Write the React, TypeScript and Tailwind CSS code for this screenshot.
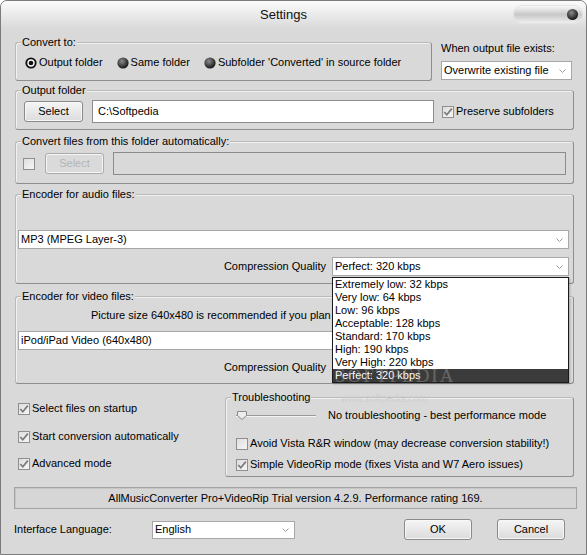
import React from "react";

const qualities = [
  "Extremely low: 32 kbps",
  "Very low: 64 kbps",
  "Low: 96 kbps",
  "Acceptable: 128 kbps",
  "Standard: 170 kbps",
  "High: 190 kbps",
  "Very High: 220 kbps",
  "Perfect: 320 kbps",
];

function Group({ title, className = "", children }: { title: string; className?: string; children?: React.ReactNode }) {
  return (
    <fieldset
      className={`rounded-[3px] border border-[#b9b9b9] border-b-[#8e8e8e] border-r-[#8e8e8e] shadow-[inset_1px_1px_0_#f1f1f1] ${className}`}
    >
      <legend className="ml-[5px] bg-[#d9d9d9] px-[1px] leading-[13px]">{title}</legend>
      {children}
    </fieldset>
  );
}

function Radio({ on = false }: { on?: boolean }) {
  return (
    <svg width="12" height="12" viewBox="0 0 12 12" className="shrink-0">
      <defs>
        <radialGradient id="sphere" cx="40%" cy="35%" r="65%">
          <stop offset="0" stopColor="#8c8c8c" />
          <stop offset="1" stopColor="#151515" />
        </radialGradient>
      </defs>
      {on ? (
        <>
          <circle cx="6" cy="6" r="5.6" fill="#111" />
          <circle cx="6" cy="6" r="3.7" fill="#fff" />
          <circle cx="6" cy="6" r="2.3" fill="#111" />
        </>
      ) : (
        <circle cx="6" cy="6" r="5.6" fill="url(#sphere)" />
      )}
    </svg>
  );
}

function Check({ checked = false }: { checked?: boolean }) {
  return (
    <span className="flex h-[12px] w-[12px] shrink-0 items-center justify-center border border-[#8f8f8f] bg-gradient-to-br from-[#dedede] to-[#f6f6f6]">
      {checked && (
        <svg width="10" height="10" viewBox="0 0 10 10">
          <path d="M1.3 5 L3.8 7.8 L8.8 1.6" fill="none" stroke="#7a7a7a" strokeWidth="1.7" />
        </svg>
      )}
    </span>
  );
}

function CheckRow({ checked, text, className = "" }: { checked?: boolean; text: string; className?: string }) {
  return (
    <div className={`flex h-[13px] items-center gap-[2px] ${className}`}>
      <Check checked={checked} />
      <span className="whitespace-nowrap">{text}</span>
    </div>
  );
}

function Combo({ value, className = "" }: { value: string; className?: string }) {
  return (
    <div className={`flex items-center border border-[#a7a7a7] bg-white pl-[2px] ${className}`}>
      <span className="flex-1 truncate">{value}</span>
      <svg width="7" height="4" viewBox="0 0 7 4" className="mr-[5px] shrink-0">
        <path d="M0.5 0.5 L3.5 3.5 L6.5 0.5" fill="none" stroke="#9c9c9c" />
      </svg>
    </div>
  );
}

function Btn({ children, className = "", disabled = false }: { children: React.ReactNode; className?: string; disabled?: boolean }) {
  return (
    <div
      className={`flex items-center justify-center rounded-[3px] border shadow-[inset_0_0_0_1px_#f7f7f7] ${
        disabled
          ? "border-[#a9a9a9] bg-[#dadada] text-[#b5b5b5]"
          : "border-[#8a8a8a] bg-gradient-to-b from-[#f5f5f5] to-[#dcdcdc]"
      } ${className}`}
    >
      {children}
    </div>
  );
}

function Slider() {
  return (
    <svg width="80" height="13" viewBox="0 0 80 13" className="shrink-0">
      <line x1="0" y1="6.5" x2="80" y2="6.5" stroke="#9a9a9a" />
      <line x1="0" y1="7.5" x2="80" y2="7.5" stroke="#f4f4f4" />
      <path d="M1.5 2.5 H10.5 V6.5 L6 10.5 L1.5 6.5 Z" fill="#ececec" stroke="#8a8a8a" />
    </svg>
  );
}

export default function App() {
  return (
    <div className="relative h-[555px] w-[587px] overflow-hidden rounded-t-[7px] border border-[#7b7b7b] bg-[#d9d9d9] font-['Liberation_Sans',Arial,sans-serif] text-[11px] leading-[13px] text-black">
      {/* Title bar */}
      <div className="relative flex h-[27px] items-center justify-center bg-gradient-to-b from-[#fbfbfb] to-[#dadada] pr-[20px]">
        <span className="text-[13px] leading-[16px] text-[#111]">Settings</span>
        <div className="absolute right-[3px] top-[4px] flex h-[19px] w-[70px] items-center justify-end rounded-full bg-gradient-to-b from-[#fefefe] via-[#c8c8c8] to-[#f3f3f3] pr-[5px] shadow-[inset_0_0_0_1px_#e4e4e4]">
          <span className="h-[11px] w-[11px] rounded-full bg-[radial-gradient(circle_at_40%_35%,#8a8a8a,#1c1c1c_70%)]" />
        </div>
      </div>

      <div className="pl-[14px]">
        {/* Convert to + existing file */}
        <div className="mt-[8px] flex">
          <Group title="Convert to:" className="h-[45px] w-[417px]">
            <div className="flex items-center gap-[14px] pl-[9px] pt-[7px]">
              <div className="flex items-center gap-[2px]">
                <Radio on />
                <span>Output folder</span>
              </div>
              <div className="flex items-center gap-[2px]">
                <Radio />
                <span>Same folder</span>
              </div>
              <div className="flex items-center gap-[2px]">
                <Radio />
                <span>Subfolder 'Converted' in source folder</span>
              </div>
            </div>
          </Group>
          <div className="ml-[9px] pt-[6px]">
            <div>When output file exists:</div>
            <Combo className="mt-[6px] h-[19px] w-[131px]" value="Overwrite existing file" />
          </div>
        </div>

        {/* Output folder */}
        <Group title="Output folder" className="mt-[3px] h-[46px] w-[559px]">
          <div className="flex items-center pl-[8px] pt-[3px]">
            <Btn className="h-[21px] w-[59px]">Select</Btn>
            <div className="ml-[9px] flex h-[23px] w-[342px] items-center border border-[#8c8c8c] bg-white pl-[5px]">
              C:\Softpedia
            </div>
            <div className="ml-[8px] flex items-center gap-[2px]">
              <Check checked />
              <span>Preserve subfolders</span>
            </div>
          </div>
        </Group>

        {/* Convert automatically */}
        <Group title="Convert files from this folder automatically:" className="mt-[5px] h-[49px] w-[559px]">
          <div className="flex items-center pl-[7px] pt-[4px]">
            <Check />
            <Btn disabled className="ml-[10px] h-[21px] w-[59px]">
              Select
            </Btn>
            <div className="ml-[9px] h-[23px] w-[453px] border border-[#8b8b8b]" />
          </div>
        </Group>

        {/* Audio encoder */}
        <Group title="Encoder for audio files:" className="mt-[4px] h-[96px] w-[559px]">
          <Combo className="ml-[2px] mt-[29px] h-[19px] w-[551px]" value="MP3 (MPEG Layer-3)" />
          <div className="mt-[8px] flex items-center justify-end pr-[4px]">
            <span className="mr-[6px]">Compression Quality</span>
            <div className="relative">
              <Combo className="h-[19px] w-[237px]" value="Perfect: 320 kbps" />
              <div className="absolute left-0 top-[20px] z-10 w-[237px] overflow-hidden border border-[#1b1b1b] bg-white shadow-[1px_1px_2px_rgba(0,0,0,0.25)]">
                {qualities.map((q, i) => (
                  <div
                    key={q}
                    className={`h-[13px] pl-[2px] leading-[13px] ${
                      i === qualities.length - 1 ? "bg-[#3b3b3b] text-white" : ""
                    }`}
                  >
                    {q}
                  </div>
                ))}
                <span className="pointer-events-none absolute bottom-[-3px] left-[2px] font-['Liberation_Serif',serif] text-[19px] leading-[19px] tracking-[2px] text-[#a8a8a8] opacity-40">
                  SOFTPEDIA
                </span>
              </div>
            </div>
          </div>
        </Group>

        {/* Video encoder */}
        <Group title="Encoder for video files:" className="mt-[6px] h-[94px] w-[559px]">
          <div className="whitespace-nowrap pl-[75px] pt-[6px]">
            Picture size 640x480 is recommended if you plan to watch videos on iPod or iPad.
          </div>
          <Combo className="ml-[2px] mt-[9px] h-[19px] w-[551px]" value="iPod/iPad Video (640x480)" />
          <div className="mt-[8px] flex items-center justify-end pr-[4px]">
            <span className="mr-[6px]">Compression Quality</span>
            <Combo className="h-[19px] w-[237px]" value="Standard" />
          </div>
        </Group>

        {/* Options + troubleshooting */}
        <div className="mt-[7px] flex">
          <div className="w-[210px] pl-[3px] pt-[11px]">
            <CheckRow checked text="Select files on startup" />
            <CheckRow checked className="mt-[15px]" text="Start conversion automatically" />
            <CheckRow checked className="mt-[14px]" text="Advanced mode" />
          </div>
          <Group title="Troubleshooting" className="relative h-[86px] w-[349px]">
            <span className="pointer-events-none absolute left-[115px] top-[-12px] text-[10px] text-[#cfcfcf]">
              www.softpedia.com
            </span>
            <div className="flex items-center pl-[10px] pt-[5px]">
              <Slider />
              <span className="ml-[12px]">No troubleshooting - best performance mode</span>
            </div>
            <CheckRow className="mt-[15px] pl-[10px]" text="Avoid Vista R&R window (may decrease conversion stability!)" />
            <CheckRow checked className="mt-[8px] pl-[10px]" text="Simple VideoRip mode (fixes Vista and W7 Aero issues)" />
          </Group>
        </div>

        {/* Status */}
        <div className="-ml-px mt-[10px] flex h-[22px] w-[563px] items-center justify-center border border-[#a4a4a4] bg-[#d6d6d6] shadow-[inset_1px_1px_0_#c6c6c6]">
          AllMusicConverter Pro+VideoRip Trial version 4.2.9. Performance rating 169.
        </div>

        {/* Bottom row */}
        <div className="-ml-px mt-[10px] flex h-[21px] items-center">
          <span className="w-[138px]">Interface Language:</span>
          <Combo className="h-[18px] w-[143px]" value="English" />
          <Btn className="ml-[109px] h-[21px] w-[68px]">OK</Btn>
          <Btn className="ml-[25px] h-[21px] w-[68px]">Cancel</Btn>
        </div>
      </div>
    </div>
  );
}
